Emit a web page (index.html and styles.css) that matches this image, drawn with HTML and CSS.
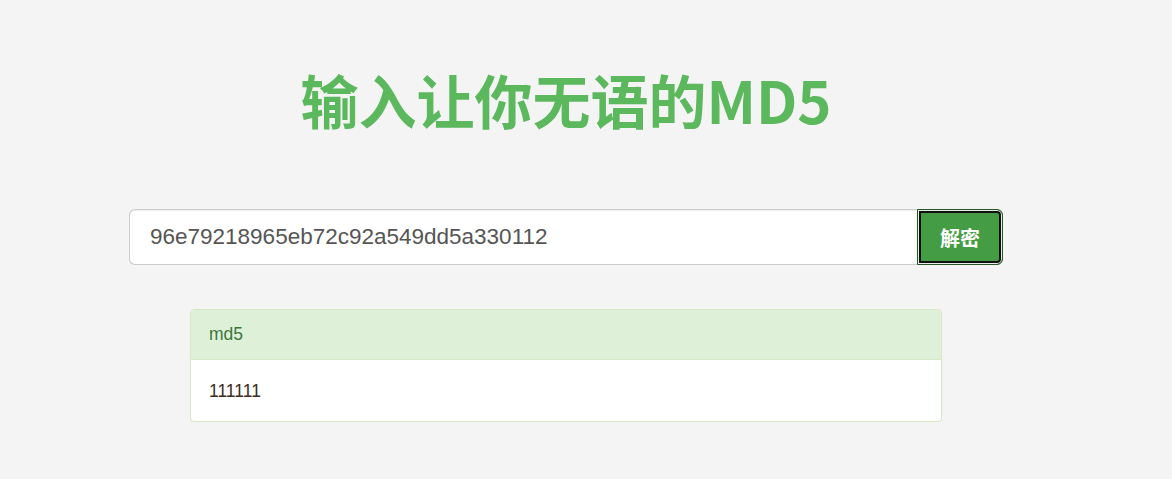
FILE: index.html
```html
<!DOCTYPE html>
<html lang="zh-CN">
<head>
    <meta charset="UTF-8">
    <meta name="viewport" content="width=device-width, initial-scale=1.0">
    <title>输入让你无语的MD5</title>
    <link rel="stylesheet" href="styles.css">
</head>
<body>
    <div class="page">
        <h1 class="title">输入让你无语的MD5</h1>

        <!-- 查询表单 -->
        <form class="search-form">
            <input type="text" class="search-input" value="96e79218965eb72c92a549dd5a330112">
            <button type="submit" class="search-button">解密</button>
        </form>

        <div class="result-panel">
            <div class="result-heading">md5</div>
            <div class="result-body">111111</div>
        </div>
    </div>
</body>
</html>
```

FILE: styles.css
```css
body {
    font-family: 'Liberation Sans', Arial, 'Noto Sans CJK SC', sans-serif;
    background-color: #f4f4f4;
    color: #333;
    margin: 0;
}

.page {
    width: 874px;
    margin-left: 129px;
}

.title {
    font-family: 'Noto Sans CJK SC', sans-serif;
    font-size: 58px;
    font-weight: 700;
    line-height: 70px;
    color: #5cb85c;
    text-align: center;
    margin: 64px 0 75px;
}

.search-form {
    display: flex;
    height: 56px;
    margin: 0;
}

.search-input {
    flex: 1;
    min-width: 0;
    height: 56px;
    box-sizing: border-box;
    padding: 0 20px;
    font-family: 'Liberation Sans', Arial, sans-serif;
    font-size: 22.5px;
    color: #555;
    background-color: #fff;
    border: 1px solid #ccc;
    border-right: none;
    border-radius: 6px 0 0 6px;
    box-shadow: inset 0 1px 1px rgba(0, 0, 0, 0.075);
    outline: none;
}

.search-button {
    width: 86px;
    height: 56px;
    box-sizing: border-box;
    font-family: 'Noto Sans CJK SC', sans-serif;
    font-size: 20px;
    font-weight: 700;
    color: #fff;
    background-color: #449d44;
    border: 1px solid #255625;
    border-radius: 0 6px 6px 0;
    box-shadow: inset 0 0 0 1px #e8efe8, inset 0 0 0 3px #111; /* focus ring */
    cursor: pointer;
}

.result-panel {
    margin: 44px 61px 0;
    background-color: #fff;
    border: 1px solid #d6e9c6;
    border-radius: 4px;
    box-shadow: 0 1px 1px rgba(0, 0, 0, 0.05);
    font-size: 17.5px;
}

.result-heading {
    height: 49px;
    line-height: 49px;
    padding: 0 18px;
    color: #3c763d;
    background-color: #dff0d8;
    border-bottom: 1px solid #d6e9c6;
    border-radius: 3px 3px 0 0;
}

.result-body {
    height: 61px;
    line-height: 62px;
    padding: 0 18px;
    color: #3d2b22;
}
```
